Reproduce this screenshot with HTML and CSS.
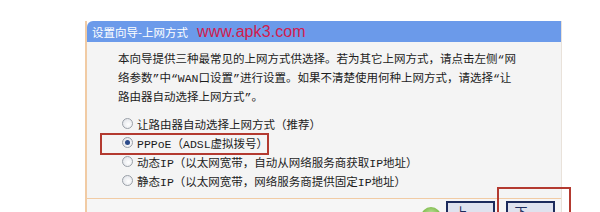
FILE: index.html
```html
<!DOCTYPE html>
<html>
<head>
<meta charset="utf-8">
<link rel="stylesheet" href="styles.css">
</head>
<body>
<div class="panel">
  <div class="title">
    <span class="title-text">设置向导-上网方式</span>
    <span class="site">www.apk3.com</span>
  </div>
  <div class="content">
    <p class="intro">本向导提供三种最常见的上网方式供选择。若为其它上网方式，请点击左侧“网<br>络参数”中“WAN口设置”进行设置。如果不清楚使用何种上网方式，请选择“让<br>路由器自动选择上网方式”。</p>
    <ul class="options">
      <li class="option"><span class="radio"></span><span>让路由器自动选择上网方式（推荐）</span></li>
      <li class="option"><span class="radio checked"></span><span>PPPoE（ADSL虚拟拨号）</span></li>
      <li class="option"><span class="radio"></span><span>动态IP（以太网宽带，自动从网络服务商获取IP地址）</span></li>
      <li class="option"><span class="radio"></span><span>静态IP（以太网宽带，网络服务商提供固定IP地址）</span></li>
    </ul>
  </div>
  <div class="footer">
    <button class="btn">上一步</button>
    <button class="btn">下一步</button>
  </div>
</div>
<div class="mark mark-pppoe"></div>
<div class="mark mark-next"></div>
<div class="green-dot"></div>
</body>
</html>
```
FILE: styles.css
```css
html, body {
  margin: 0;
  padding: 0;
  background: #ffffff;
  overflow: hidden;
}
body {
  width: 600px;
  height: 212px;
  position: relative;
  font-family: "Liberation Mono", "Noto Sans CJK SC", monospace;
  font-size: 11.5px;
  color: #1c1c1c;
}
.panel {
  margin: 21px 0 0 85px;
  width: 474px;
  border-left: 2px solid #f1cba4;
  border-right: 1px solid #e9e2da;
}
.title {
  height: 21px;
  background: #6b9aea;
  border-top-left-radius: 6px;
  display: flex;
  align-items: center;
  padding-left: 5px;
  gap: 9px;
}
.title-text {
  font-family: "Noto Sans CJK SC", sans-serif;
  color: #ffffff;
  font-size: 11.5px;
}
.site {
  font-family: "Liberation Sans", Arial, sans-serif;
  font-size: 16px;
  color: #d21b4e;
  letter-spacing: 0.1px;
}
.content {
  background: #f4f4f4;
  padding: 8px 0 8px 31px;
  border-bottom: 1px solid #f1cba4;
}
.intro {
  margin: 0;
  line-height: 19px;
  white-space: nowrap;
}
.options {
  list-style: none;
  margin: 7px 0 0 4px;
  padding: 0;
}
.option {
  height: 19px;
  display: flex;
  align-items: center;
  gap: 4px;
}
.radio {
  width: 9px;
  height: 9px;
  border: 1px solid #9aa0a8;
  border-radius: 50%;
  background: radial-gradient(circle at 60% 60%, #ffffff 0, #e6e8ec 70%, #c9ccd2 100%);
  position: relative;
  flex: none;
}
.radio.checked::after {
  content: "";
  position: absolute;
  left: 2px;
  top: 2px;
  width: 5px;
  height: 5px;
  border-radius: 50%;
  background: #2a4a8a;
}
.footer {
  background: #f6f6f6;
  height: 12px;
  display: flex;
  justify-content: flex-end;
  align-items: flex-start;
  gap: 11px;
  padding: 2px 6px 0 0;
  overflow: hidden;
}
.btn {
  width: 49px;
  height: 22px;
  border: 2px solid #1d2b5c;
  background: #dfe2ee;
  font-family: "Noto Sans CJK SC", sans-serif;
  font-size: 13px;
  color: #1d2b5c;
  padding: 0;
  letter-spacing: 3px;
  line-height: 18px;
  flex: none;
}
.mark {
  position: absolute;
  border: 2px solid #b33a30;
}
.mark-pppoe {
  left: 100px;
  top: 133px;
  width: 165px;
  height: 18px;
}
.mark-next {
  left: 497px;
  top: 187px;
  width: 70px;
  height: 40px;
}
.green-dot {
  position: absolute;
  left: 421px;
  top: 207px;
  width: 20px;
  height: 20px;
  border-radius: 50%;
  background: radial-gradient(circle at 50% 40%, #c8e6a8 0, #7dbb4a 60%, #5c9a34 100%);
}
```
